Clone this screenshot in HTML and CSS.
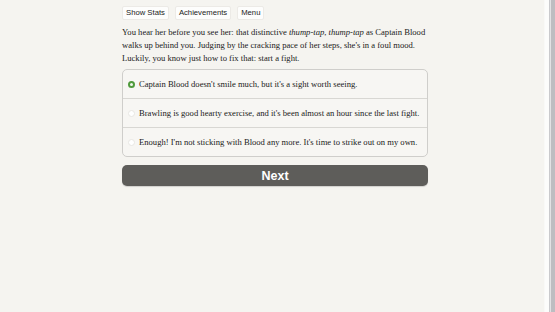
FILE: index.html
```html
<!DOCTYPE html>
<html>
<head>
<meta charset="utf-8">
<link rel="stylesheet" href="styles.css">
</head>
<body>
<div class="page">
  <main class="main">
    <div class="column">
      <nav class="toolbar">
        <button class="tbtn">Show Stats</button>
        <button class="tbtn">Achievements</button>
        <button class="tbtn">Menu</button>
      </nav>
      <p class="story">You hear her before you see her: that distinctive <i>thump-tap</i>, <i>thump-tap</i> as Captain Blood walks up behind you. Judging by the cracking pace of her steps, she's in a foul mood. Luckily, you know just how to fix that: start a fight.</p>
      <div class="choices">
        <label class="choice"><span class="radio checked"></span><span>Captain Blood doesn't smile much, but it's a sight worth seeing.</span></label>
        <label class="choice"><span class="radio"></span><span>Brawling is good hearty exercise, and it's been almost an hour since the last fight.</span></label>
        <label class="choice"><span class="radio"></span><span>Enough! I'm not sticking with Blood any more. It's time to strike out on my own.</span></label>
      </div>
      <button class="next">Next</button>
    </div>
  </main>
  <div class="scrollbar">
    <span class="s1"></span><span class="s2"></span><span class="s3"></span><span class="s4"></span><span class="s5"></span>
  </div>
</div>
</body>
</html>
```

FILE: styles.css
```css
html, body {
  margin: 0;
  padding: 0;
  height: 100%;
  background: #f5f4f0;
}
.page {
  display: flex;
  height: 312px;
}
.main {
  flex: 1;
  padding-left: 122px;
}
.column {
  width: 306px;
  display: flex;
  flex-direction: column;
}
.toolbar {
  display: flex;
  gap: 6px;
  margin-top: 6px;
}
.tbtn {
  font-family: "Liberation Sans", Arial, sans-serif;
  font-size: 7.7px;
  color: #222;
  background: #fdfdfc;
  border: 1px solid #eceae6;
  border-radius: 2px;
  height: 14px;
  padding: 0 3px;
  line-height: 12px;
}
.story {
  font-family: "Liberation Serif", "Times New Roman", serif;
  font-size: 8.6px;
  line-height: 13px;
  color: #1a1a1a;
  margin: 6px 0 0 0;
}
.choices {
  margin-top: 4px;
  border: 1px solid #cfcecb;
  border-radius: 5px;
  background: #f7f6f3;
  display: flex;
  flex-direction: column;
}
.choice {
  display: flex;
  align-items: center;
  gap: 4px;
  height: 28px;
  padding-left: 5px;
  font-family: "Liberation Serif", "Times New Roman", serif;
  font-size: 8.6px;
  color: #1a1a1a;
  border-top: 1px solid #d8d7d3;
}
.choice:first-child {
  border-top: none;
}
.radio {
  width: 7px;
  height: 7px;
  border-radius: 50%;
  background: #ffffff;
  border: 1px solid #e8e7e3;
  box-sizing: border-box;
  flex: none;
}
.radio.checked {
  background: #f0f7ec;
  border: 2px solid #4f9a3c;
  box-shadow: none;
}
.next {
  margin-top: 8px;
  height: 21px;
  border: none;
  border-radius: 5px;
  background: #5e5d5a;
  color: #fff;
  font-family: "Liberation Sans", Arial, sans-serif;
  font-weight: bold;
  font-size: 12.5px;
  box-shadow: 0 1px 1px rgba(0,0,0,0.15);
}
.scrollbar {
  width: 11px;
  display: flex;
}
.scrollbar span { display: block; }
.s1 { width: 1px; background: #f9f9f7; }
.s2 { width: 4px; background: #fcfcfb; }
.s3 { width: 1px; background: #cacacd; }
.s4 { width: 1px; background: #e2e2e4; }
.s5 { width: 4px; background: #bdbdc1; }
```
